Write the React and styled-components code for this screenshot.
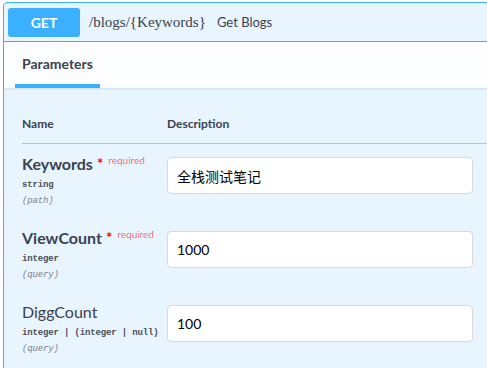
import React from "react";
import styled, { createGlobalStyle } from "styled-components";

const GlobalStyle = createGlobalStyle`
  html, body {
    margin: 0;
    padding: 0;
    overflow: hidden;
    background: #ffffff;
  }
  body {
    font-family: Lato, "Noto Sans", "Noto Sans CJK SC", sans-serif;
    color: #3b4151;
  }
`;

const Page = styled.div`
  padding: 2px 0 0 3px;
`;

const OpBlock = styled.div`
  width: 620px;
  border: 1px solid #3bb0fe;
  border-radius: 4px;
  background: #e8f5fe;
  min-height: 400px;
`;

const Summary = styled.div`
  display: flex;
  align-items: center;
  height: 38px;
  padding: 0 4px;
  border-bottom: 1px solid #3bb0fe;
`;

const Method = styled.div`
  width: 72px;
  height: 29px;
  border-radius: 3px;
  background: #3bb0fe;
  color: #ffffff;
  font-family: Lato, sans-serif;
  font-weight: 700;
  font-size: 14px;
  display: flex;
  align-items: center;
  justify-content: center;
`;

const Path = styled.span`
  margin-left: 9px;
  font-family: "Liberation Serif", serif;
  font-size: 15px;
  color: #3b4151;
`;

const Summ = styled.span`
  margin-left: 11px;
  font-size: 13px;
  color: #3b4151;
`;

const SectionHeader = styled.div`
  height: 46px;
  display: flex;
  align-items: flex-end;
  padding-left: 11px;
  background: rgba(255, 255, 255, 0.8);
  box-shadow: 0 1px 2px rgba(0, 0, 0, 0.1);
`;

const Tab = styled.div`
  padding: 0 7px 10px;
  line-height: 20px;
  font-size: 14px;
  font-weight: 700;
  color: #3b4151;
  border-bottom: 4px solid #3bb0fe;
`;

const Table = styled.div`
  padding: 28px 0 0 18px;
`;

const HeadRow = styled.div`
  display: flex;
  padding-bottom: 11px;
  border-bottom: 1px solid #b9c4ce;
`;

const HeadCell = styled.div`
  width: ${(p) => (p.$first ? "145px" : "auto")};
  font-size: 12px;
  line-height: 16px;
  font-weight: 700;
  color: #3b4151;
`;

const Row = styled.div`
  display: flex;
  box-sizing: border-box;
  height: 74px;
  padding-top: 10px;
`;

const NameCell = styled.div`
  width: 145px;
  flex: none;
  white-space: nowrap;
`;

const Name = styled.div`
  font-size: 16px;
  line-height: 20px;
  font-weight: ${(p) => (p.$required ? 700 : 400)};
  color: #3b4151;
`;

const Star = styled.span`
  margin-left: 4px;
  font-size: 15px;
  line-height: 1;
  font-weight: 700;
  color: #ff0000;
  vertical-align: 1px;
`;

const Required = styled.span`
  margin-left: 5px;
  font-size: 10px;
  line-height: 1;
  font-weight: 400;
  color: rgba(255, 0, 0, 0.6);
  vertical-align: 6px;
`;

const Type = styled.div`
  margin-top: 3px;
  font-family: "Liberation Mono", monospace;
  font-size: 9px;
  font-weight: 700;
  line-height: 16px;
  letter-spacing: -0.15px;
  color: #4a4f5c;
`;

const In = styled.div`
  font-family: "Liberation Mono", monospace;
  font-style: italic;
  font-size: 9px;
  line-height: 16px;
  letter-spacing: -0.15px;
  color: #7d8189;
`;

const DescCell = styled.div`
  margin-top: 3px;
`;

const Input = styled.input`
  box-sizing: border-box;
  width: 306px;
  height: 37px;
  margin: 0;
  padding: 0 9px;
  border: 1px solid #d9d9d9;
  border-radius: 4px;
  background: #ffffff;
  font-family: Lato, "Noto Sans CJK SC", sans-serif;
  font-size: 14px;
  color: #000000;
  outline: none;
`;

const params = [
  { name: "Keywords", required: true, type: "string", where: "(path)", value: "全栈测试笔记" },
  { name: "ViewCount", required: true, type: "integer", where: "(query)", value: "1000" },
  { name: "DiggCount", required: false, type: "integer | (integer | null)", where: "(query)", value: "100" },
];

export default function App() {
  return (
    <>
      <GlobalStyle />
      <Page>
        <OpBlock>
          <Summary>
            <Method>GET</Method>
            <Path>/blogs/{"{Keywords}"}</Path>
            <Summ>Get Blogs</Summ>
          </Summary>
          <SectionHeader>
            <Tab>Parameters</Tab>
          </SectionHeader>
          <Table>
            <HeadRow>
              <HeadCell $first>Name</HeadCell>
              <HeadCell>Description</HeadCell>
            </HeadRow>
            {params.map((p) => (
              <Row key={p.name}>
                <NameCell>
                  <Name $required={p.required}>
                    {p.name}
                    {p.required && (
                      <>
                        <Star>*</Star>
                        <Required>required</Required>
                      </>
                    )}
                  </Name>
                  <Type>{p.type}</Type>
                  <In>{p.where}</In>
                </NameCell>
                <DescCell>
                  <Input defaultValue={p.value} />
                </DescCell>
              </Row>
            ))}
          </Table>
        </OpBlock>
      </Page>
    </>
  );
}
